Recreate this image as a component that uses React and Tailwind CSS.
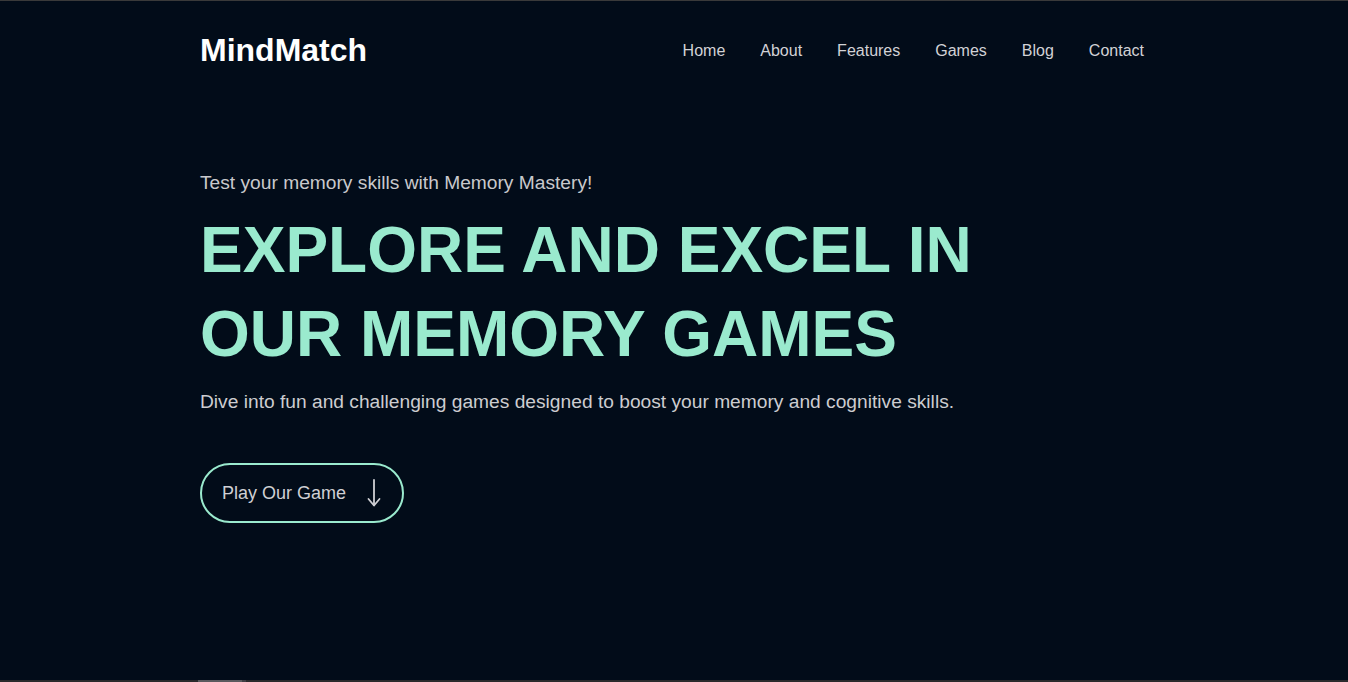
export default function App() {
  const links = ["Home", "About", "Features", "Games", "Blog", "Contact"];
  return (
    <div
      className="h-[682px] w-full bg-[#020c19] border-t border-[#3a3a3a] flex flex-col overflow-hidden"
      style={{ fontFamily: '"Liberation Sans", Arial, sans-serif' }}
    >
      <div className="flex-1">
        <div className="ml-[200px] mr-[204px]">
          <header className="h-[98px] flex items-center justify-between">
            <div className="text-[32px] font-bold text-white leading-none">MindMatch</div>
            <nav className="flex items-center gap-[35px] pt-[2px] text-[16px] text-[#d2d2d6]">
              {links.map((l) => (
                <a key={l} className="leading-none">{l}</a>
              ))}
            </nav>
          </header>
          <section className="pt-[69px]">
            <p className="text-[19.2px] leading-[29px] text-[#c9c9cc]">
              Test your memory skills with Memory Mastery!
            </p>
            <h1 className="mt-[11px] w-[880px] text-[64px] leading-[84px] font-bold text-[#9aeace]">
              EXPLORE AND EXCEL IN OUR MEMORY GAMES
            </h1>
            <p className="mt-[11px] text-[19.2px] leading-[29px] text-[#cdcdd0]">
              Dive into fun and challenging games designed to boost your memory and cognitive skills.
            </p>
            <button className="mt-[47px] h-[60px] w-[204px] rounded-full border-2 border-[#9aeace] flex items-center pl-[20px] text-[18px] text-[#d0d0d4]">
              <span>Play Our Game</span>
              <svg className="ml-[21px]" width="14" height="30" viewBox="0 0 14 30" fill="none" stroke="#d0d0d4" strokeWidth="1.8" strokeLinecap="round" strokeLinejoin="round">
                <path d="M7 2 V27" />
                <path d="M1.5 21 L7 27.5 L12.5 21" />
              </svg>
            </button>
          </section>
        </div>
      </div>
      <div className="h-[2px] bg-[#2a2a2c] flex">
        <div className="ml-[198px] w-[44px] bg-[#5a5a5e]" />
        <div className="w-[4px] bg-[#3f3f44]" />
      </div>
    </div>
  );
}
